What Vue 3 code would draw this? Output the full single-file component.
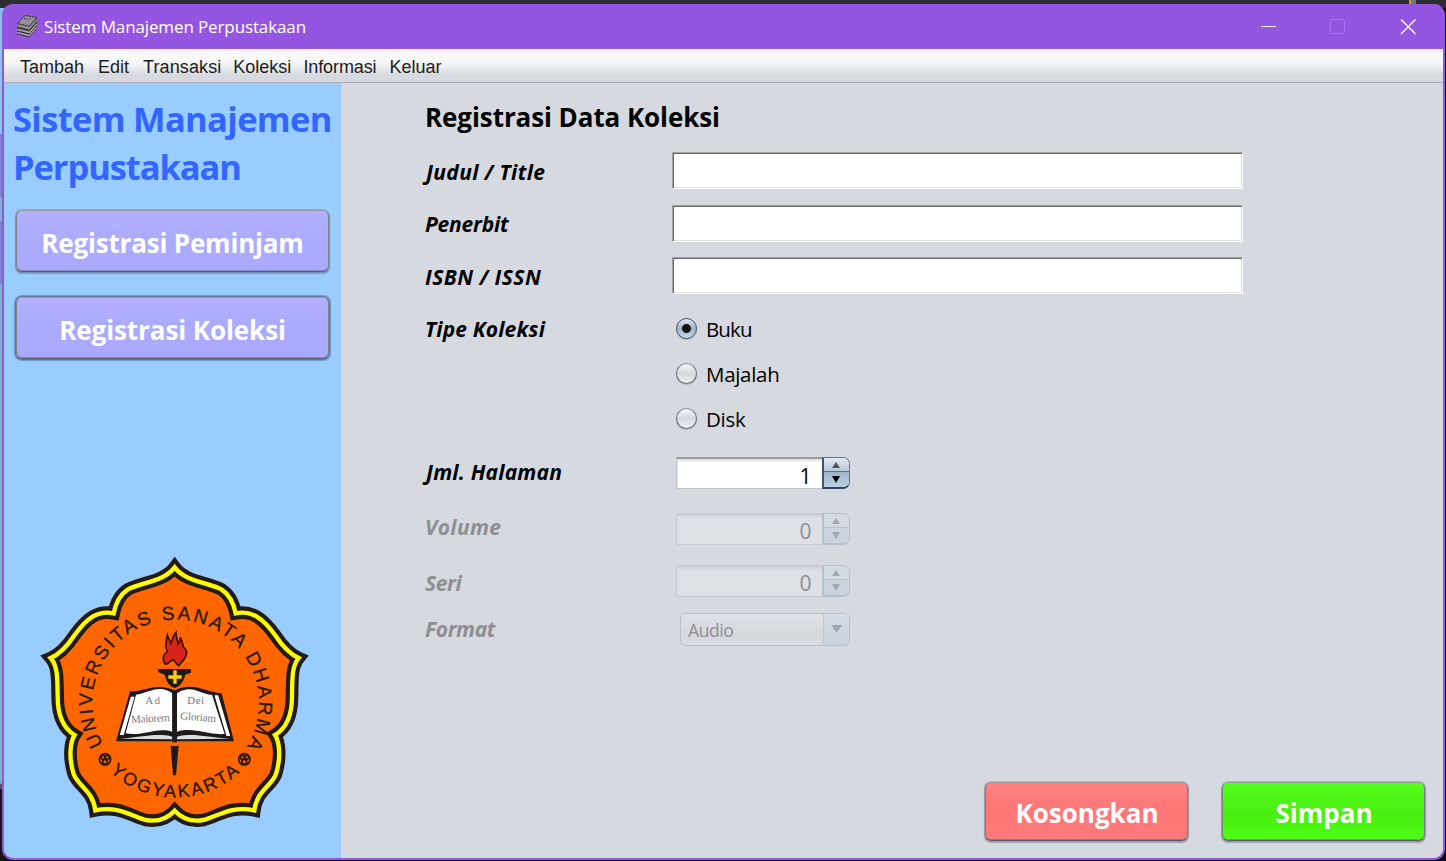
<script setup>
const menus = ['Tambah', 'Edit', 'Transaksi', 'Koleksi', 'Informasi', 'Keluar']
const fields = ['Judul / Title', 'Penerbit', 'ISBN / ISSN']
const types = ['Buku', 'Majalah', 'Disk']
const spinners = [
  { label: 'Jml. Halaman', value: 1, off: false, cls: 'r-pages' },
  { label: 'Volume', value: 0, off: true, cls: 'r-volume' },
  { label: 'Seri', value: 0, off: true, cls: 'r-seri' },
]
</script>

<template>
  <div class="desktop">
    <div class="window">
      <header class="titlebar">
        <svg class="app-icon" width="22" height="24" viewBox="0 0 22 24">
          <path d="M1 9 9 1l12 2v11l-7 8-13-3z" fill="#5d5860" />
          <path d="M1.500 9.500 9 1.500l11.500 2-7 8.500z" fill="#959396" stroke="#333" stroke-dasharray="2 1" />
          <path d="M8 4.500l3 .6M12 5.500l3-1" stroke="#7a45b5" stroke-width="1.300" />
          <path d="M1.500 10.500l12 2.500 7-8v2l-7 8-12-2.500z" fill="#959396" />
          <path d="M1 15.500l12.500 3 7-8M1 18.500l12.500 3 7-8" fill="none" stroke="#aaa5ac" stroke-width="1.500" />
          <path d="M1 13.500l12.500 3 7-8M1 17l12.500 3 7-8M1 20l12.500 3 7-8" fill="none" stroke="#222" stroke-width="1" stroke-dasharray="2 1" />
        </svg>
        <span class="caption">Sistem Manajemen Perpustakaan</span>
        <svg class="controls" width="160" height="20" viewBox="0 0 160 20" fill="none">
          <path d="M1 10.500h15" stroke="#fff" />
          <rect x="70.500" y="3.500" width="14" height="14" rx="1" stroke="#a873e8" />
          <path d="M141 3.500l14.500 14.500M155.500 3.500L141 18" stroke="#fff" stroke-width="1.300" />
        </svg>
      </header>
      <nav class="menubar">
        <span v-for="m in menus" :key="m" :class="'m-' + m.toLowerCase()">{{ m }}</span>
      </nav>
      <div class="body">
        <aside class="sidebar">
          <h1><span>Sistem Manajemen</span><br /><span class="line2">Perpustakaan</span></h1>
          <button class="btn lilac"><span class="t-pem">Registrasi Peminjam</span></button>
          <button class="btn lilac focused"><span class="t-kol">Registrasi Koleksi</span></button>
          <svg class="logo" width="290" height="290" viewBox="0 0 870 870">
            <defs>
              <path
                id="crest"
                d="M434 52C467 96 534 96 574 118C601 135 611 160 617 190C667 180 700 207 735 255C755 285 783 314 806 324C785 350 787 385 786 440C786 500 768 535 735 555C748 575 754 620 738 672C725 708 680 722 673 781C600 766 565 799 520 810C485 816 455 805 434 782C413 805 383 816 348 810C303 799 268 766 196 781C189 722 144 708 131 672C115 620 121 575 134 555C101 535 83 500 83 440C82 385 84 350 62 324C86 314 114 285 134 255C169 207 201 180 251 190C257 160 267 135 294 118C334 96 401 96 434 52Z"
              />
              <path id="arcTop" d="M220 583A250 250 0 1 1 655 581" />
              <path id="arcBottom" d="M240 665A287 287 0 0 0 633 664" />
            </defs>
            <use href="#crest" fill="#f60" stroke="#231a1a" stroke-width="38" />
            <use href="#crest" fill="none" stroke="#ff0" stroke-width="13" />
            <g fill="#2b1a10" stroke="#2b1a10" stroke-width="1" font-family="'Liberation Sans', Arial, sans-serif" font-size="57">
              <text textLength="1052"><textPath href="#arcTop" textLength="1052">UNIVERSITAS SANATA DHARMA</textPath></text>
              <text textLength="428" font-size="54"><textPath href="#arcBottom" textLength="428">YOGYAKARTA</textPath></text>
            </g>
            <g fill="none" stroke="#2b1a10" stroke-width="5">
              <g v-for="x in [225, 643]" :key="x">
                <circle :cx="x" cy="628" r="17" />
                <circle :cx="x - 6" cy="622" r="6" />
                <circle :cx="x + 7" cy="622" r="6" />
                <circle :cx="x" cy="635" r="7" />
              </g>
            </g>
            <path d="M405 342C395 325 402 312 412 305C404 290 408 272 412 255C416 268 421 272 423 280C427 268 430 255 438 247C438 265 443 270 444 282C449 275 452 270 451 262C458 275 457 285 461 292C472 300 472 312 464 325C458 335 450 340 447 347C440 345 438 335 430 330C420 330 415 345 405 342Z" fill="#d8251c" stroke="#3a1210" stroke-width="5" />
            <path d="M384 357H483V368L466 374C460 395 452 408 435 414C416 408 410 395 404 374L384 366Z" fill="#1f1a1a" />
            <path d="M435 361v40M415 381h40" stroke="#fc0" stroke-width="10" />
            <path d="M258 574L300 424C340 428 370 395 435 421C490 395 520 425 575 430L612 574Z" fill="#1f1a1a" />
            <path d="M318 434C352 432 385 400 427 430V545C380 530 340 560 287 550Z" fill="#fff" />
            <path d="M441 430C485 400 515 436 546 434L584 552C530 556 495 530 441 545Z" fill="#fff" />
            <path d="M304 442L272 553L280 553L311 442ZM563 438L598 556L591 556L556 438Z" fill="#fff" stroke="#fff" stroke-width="4" />
            <path d="M270 566C330 562 380 548 427 560V568ZM441 560C490 548 530 562 600 566L441 568Z" fill="#ddd" />
            <path d="M427 425h13v152h-13z" fill="#1f1a1a" />
            <path d="M422 588h24l-8 88h-9z" fill="#1f1a1a" />
            <g fill="#777" font-family="'Liberation Serif', serif" font-size="33">
              <text x="346" y="463" textLength="44">Ad</text>
              <text x="472" y="461" textLength="50">Dei</text>
              <text x="303" y="516" textLength="117" transform="rotate(-3 360 505)">Maiorem</text>
              <text x="450" y="512" textLength="108" transform="rotate(4 500 505)">Gloriam</text>
            </g>
          </svg>
        </aside>
        <main class="form">
          <h2>Registrasi Data Koleksi</h2>
          <div v-for="(f, i) in fields" :key="f" class="row" :class="'r-field' + i">
            <label>{{ f }}</label>
            <input type="text" />
          </div>
          <div v-for="(t, i) in types" :key="t" class="row" :class="'r-type' + i">
            <label><template v-if="i === 0">Tipe Koleksi</template></label>
            <span class="option"><i class="radio" :class="{ on: i === 0 }"></i><span :class="'o' + i">{{ t }}</span></span>
          </div>
          <div v-for="s in spinners" :key="s.label" class="row" :class="[s.cls, { off: s.off }]">
            <label>{{ s.label }}</label>
            <span class="spinner">
              <span class="num">{{ s.value }}</span>
              <span class="arrows">
                <b><svg width="10" height="6"><path d="M5 0l4 6H1z" /></svg></b>
                <b class="down"><svg width="10" height="7"><path d="M1 0h8L5 7z" /></svg></b>
              </span>
            </span>
          </div>
          <div class="row r-format off">
            <label>Format</label>
            <span class="combo"><span class="ctext">Audio</span><span class="cbtn"><svg width="12" height="8"><path d="M0 0h11L5.500 8z" /></svg></span></span>
          </div>
          <footer>
            <button class="btn red"><span>Kosongkan</span></button>
            <button class="btn green"><span>Simpan</span></button>
          </footer>
        </main>
      </div>
    </div>
  </div>
</template>

<style>
body { margin: 0; overflow: hidden; }
</style>

<style scoped>
* { box-sizing: border-box; }
.desktop {
  width: 1446px; height: 861px; padding: 4px 1px 1px 2px;
  background:
    linear-gradient(#e8930c, #e8930c) 1409px 0 / 2px 4px no-repeat,
    linear-gradient(#6a7d8c, #6a7d8c) 1411px 0 / 5px 4px no-repeat,
    linear-gradient(#2d2d2d, #2d2d2d) 0 0 / 1446px 8px no-repeat,
    linear-gradient(#8cc0ee 126px, #8080d4 126px 189px, #7fb0dc 189px 213px, #8080d4 213px 276px, #80aed4 276px 775px, #b98a3a 775px 776px, #556 776px 781px, #151515 781px) 0 8px / 10px 853px no-repeat,
    #0c0c0c;
  font-family: 'Open Sans', 'Noto Sans', sans-serif;
}
.window {
  height: 856px; display: flex; flex-direction: column;
  border: 2px solid #9455e0; border-top: 0; border-radius: 11px; overflow: hidden;
  background: #9455e0;
}
.titlebar { height: 45px; flex: none; display: flex; align-items: center; color: #fff; padding-left: 12px; }
.app-icon { margin-bottom: 1px; }
.caption { font-size: 17px; margin-left: 6px; white-space: nowrap; letter-spacing: -0.12px; }
.controls { margin: 0 23px 2px auto; }
.menubar {
  height: 34px; flex: none; border-bottom: 1px solid #a9acb5; padding-left: 16px;
  display: flex; align-items: center; gap: 13px; padding-top: 3px;
  background: linear-gradient(#f4f4f6, #fafafa 30%, #f0f1f3 50%, #d6d9df 80%, #d6d9df);
  font: 18px 'Liberation Sans', Arial, sans-serif; color: #1c1c1c;
}
.m-edit { margin-left: 1px; }
.m-transaksi { letter-spacing: 0.1px; margin-left: 1px; }
.m-koleksi { margin-left: -1px; }
.m-informasi { letter-spacing: -0.1px; margin-left: -1px; }
.body { flex: 1; min-height: 0; display: flex; }
.sidebar { width: 337px; flex: none; background: #9cf; padding: 12px 0 0 9px; display: flex; flex-direction: column; }
h1 { margin: 0; font-size: 34.5px; line-height: 48px; font-weight: 700; color: #36f; white-space: nowrap; height: 115px; letter-spacing: -0.68px; }
.line2 { letter-spacing: -1.1px; }
.btn {
  font: 700 26px 'Open Sans', 'Noto Sans', sans-serif; color: #fff; white-space: nowrap; padding: 4px 0 0;
  border: 1px solid; border-color: #9a9aa4 #7f8089 #5c5d66 #7f8089; border-radius: 6px;
  display: flex; align-items: center; justify-content: center; flex: none;
  box-shadow: 0 0 0 1px rgba(110, 115, 130, .28), 0 1px 1px 1px rgba(70, 75, 90, .35), inset 0 -1px rgba(70, 75, 90, .35);
}
.lilac { width: 313px; height: 62px; margin-left: 3px; background: linear-gradient(#b3b0ff, #aaabff 50%, #aaa9ff); }
.t-pem { letter-spacing: -0.18px; }
.t-kol { letter-spacing: -0.08px; }
.focused {
  margin-top: 25px;
  box-shadow: 0 0 0 1px rgba(95, 105, 130, .7), 0 0 1px 2px #6a9cc4, inset 0 -1px rgba(70, 75, 90, .35);
}
.logo { margin: 191px 0 0 17px; flex: none; }
.form { flex: 1; background: #d6d9df; padding-left: 84px; display: flex; flex-direction: column; }
h2 { margin: 0; height: 61px; padding-top: 15px; font-size: 26px; line-height: 38px; font-weight: 700; white-space: nowrap; letter-spacing: -0.08px; }
.row { display: flex; align-items: center; flex: none; }
.row label { width: 247px; font-size: 21px; line-height: 26px; font-weight: 700; font-style: italic; white-space: nowrap; padding-top: 2px; letter-spacing: 0.15px; }
.row.off label { color: #8e8f92; }
.r-field0 { height: 53px; }
.r-field1 { height: 52px; }
.r-field2 { height: 53px; }
.row.r-field0 label { text-indent: 1px; letter-spacing: 0.35px; }
.row.r-field1 label { letter-spacing: -0.2px; }
.row.r-field2 label { letter-spacing: 0.45px; }
.r-type0 { height: 54px; }
.row.r-type0 label { padding-top: 0; }
.r-type1 { height: 36px; }
.r-type2 { height: 54px; }
.r-pages { height: 54px; }
.row.r-pages label { padding: 0 0 2px; text-indent: 1px; letter-spacing: 0.2px; }
.r-volume { height: 56px; padding-top: 1px; }
.row.r-volume label { padding: 0 0 3px; letter-spacing: 0.35px; }
.r-seri { height: 50px; }
.row.r-seri label { padding-top: 4px; letter-spacing: -0.4px; }
.r-format { height: 46px; }
.row.r-format label { letter-spacing: -0.4px; padding-top: 0; }
input {
  width: 571px; height: 37px; padding: 0; background: #fff; outline: none; border-radius: 0;
  border: 1px solid; border-color: #a0a0a0 #fff #fff #a0a0a0;
  box-shadow: inset 1px 1px #696969, inset -1px -1px #e3e3e3;
}
.option { display: flex; align-items: center; padding-left: 4px; font-size: 20.5px; line-height: 26px; letter-spacing: -0.3px; }
.option > span { padding-bottom: 1px; margin-left: 9px; }
.option > .o0 { letter-spacing: -0.9px; }
.radio {
  width: 21px; height: 21px; margin-bottom: 2px; border-radius: 50%; border: 1.5px solid #666a72; border-top-color: #8e9096;
  background: linear-gradient(#f4f5f6, #d5d8de 50%, #eff0f2); box-shadow: 0 1px 1px #aeb1b8;
}
.radio.on { border-color: #3a4f66; background: radial-gradient(circle, #111 0 4px, transparent 5px), linear-gradient(#e0e8f0, #9db3c8 50%, #c4d8ea); }
.spinner { margin-left: 4px; display: flex; width: 174px; height: 32px; }
.num {
  width: 146px; height: 32px; border: 1px solid #c0c3c8; border-right: 0; border-top: 2px solid #9a9ca1; background: #fff;
  box-shadow: inset 0 3px 2px -1px #dedfe1, inset 2px 0 1px -1px #e3e4e6; text-align: right; padding-right: 11px; padding-top: 2px;
  font-size: 21px; line-height: 30px; letter-spacing: -0.5px;
}
.arrows { width: 28px; height: 32px; border: 1px solid #5b7590; border-left: 2px solid #3d546b; border-radius: 0 7px 7px 0; overflow: hidden; border-bottom: 2px solid #2f455c; }
.arrows b { display: flex; height: 14px; padding: 1px 2px 0 0; align-items: center; justify-content: center; background: linear-gradient(#e2e9f0, #b9c9d8); border-bottom: 1px solid #5b7590; }
.arrows b.down { height: 15px; padding: 0 2px 0 0; border: 0; background: linear-gradient(#9db3c8, #bcd0e2); }
.arrows path { fill: #555; }
.arrows .down path { fill: #000; }
.off .num { background: #dde0e4; border-color: #c8cbd1; color: #8e8f92; box-shadow: inset 0 2px 2px #d2d5d9; line-height: 29px; }
.off .arrows { border-color: #b5c0cc; }
.off .arrows b { background: #d4dae2; border-color: #b5c0cc; }
.off .arrows b.down { background: #cbd3de; border-color: #b5c0cc; }
.off path, .off .arrows .down path { fill: #a2a6b0; }
.combo { margin-left: 8px; width: 170px; height: 33px; display: flex; border: 1px solid #b9bfc9; border-radius: 6px; overflow: hidden; background: linear-gradient(#e0e2e6, #d4d7dc 70%, #dadde1); }
.ctext { flex: 1; padding: 1px 0 0 7px; font-size: 17.5px; line-height: 30px; color: #8e8f92; letter-spacing: -0.4px; }
.cbtn { width: 26px; border-left: 1px solid #bec9d5; background: linear-gradient(#d5dce5, #c9d2dd); display: flex; align-items: center; justify-content: center; }
footer { margin-top: auto; margin-bottom: 17px; margin-right: 18px; display: flex; justify-content: flex-end; gap: 34px; }
footer .btn { width: 203px; height: 59px; padding: 3px 0 0 1px; }
.red { background: linear-gradient(#ff8282, #ff7676 50%, #ff7c7c); }
.green { background: linear-gradient(#55ff1c, #48ee10 55%, #4dff14); }
</style>
